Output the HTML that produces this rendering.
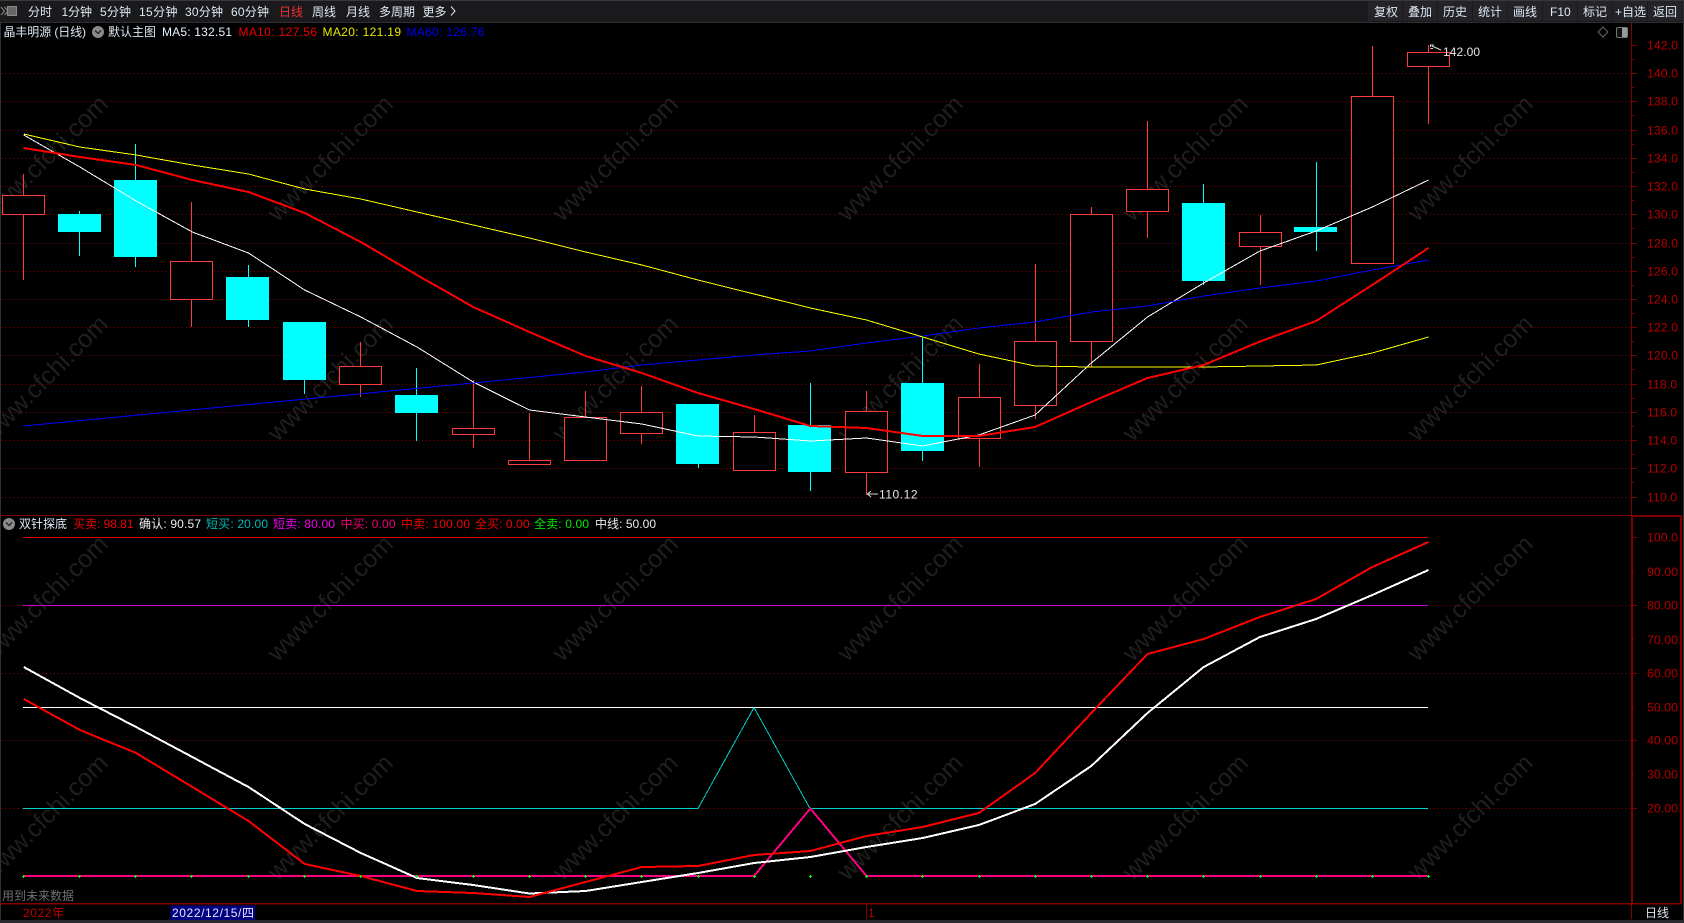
<!DOCTYPE html>
<html><head><meta charset="utf-8"><title>晶丰明源</title>
<style>
html,body{margin:0;padding:0;background:#000;width:1684px;height:923px;overflow:hidden}
svg{display:block;position:absolute;left:0;top:0}
text{font-family:"Liberation Sans","Noto Sans CJK SC",sans-serif;font-size:12px;white-space:pre}
.wm text{font-size:25px;fill:#1f1f1f;text-anchor:middle}
.ax text{fill:#b30000;font-size:12.4px}
.tb text{fill:#dde8f2}
.btn{fill:#242428}
.grid{stroke:#900000;stroke-width:1;stroke-dasharray:1 3;fill:none}
.r{fill:#000;stroke:#ff3c3c;stroke-width:1}
.rw{fill:#ff3c3c}
.c,.cw{fill:#00ffff}
</style></head><body>
<svg width="1684" height="923" viewBox="0 0 1684 923" xmlns="http://www.w3.org/2000/svg">
<rect width="1684" height="923" fill="#000"/>
<!-- watermark -->
<g class="wm">
<text transform="translate(51,164) rotate(-45)">www.cfchi.com</text>
<text transform="translate(336,164) rotate(-45)">www.cfchi.com</text>
<text transform="translate(621,164) rotate(-45)">www.cfchi.com</text>
<text transform="translate(906,164) rotate(-45)">www.cfchi.com</text>
<text transform="translate(1191,164) rotate(-45)">www.cfchi.com</text>
<text transform="translate(1476,164) rotate(-45)">www.cfchi.com</text>
<text transform="translate(51,384) rotate(-45)">www.cfchi.com</text>
<text transform="translate(336,384) rotate(-45)">www.cfchi.com</text>
<text transform="translate(621,384) rotate(-45)">www.cfchi.com</text>
<text transform="translate(906,384) rotate(-45)">www.cfchi.com</text>
<text transform="translate(1191,384) rotate(-45)">www.cfchi.com</text>
<text transform="translate(1476,384) rotate(-45)">www.cfchi.com</text>
<text transform="translate(51,604) rotate(-45)">www.cfchi.com</text>
<text transform="translate(336,604) rotate(-45)">www.cfchi.com</text>
<text transform="translate(621,604) rotate(-45)">www.cfchi.com</text>
<text transform="translate(906,604) rotate(-45)">www.cfchi.com</text>
<text transform="translate(1191,604) rotate(-45)">www.cfchi.com</text>
<text transform="translate(1476,604) rotate(-45)">www.cfchi.com</text>
<text transform="translate(51,823) rotate(-45)">www.cfchi.com</text>
<text transform="translate(336,823) rotate(-45)">www.cfchi.com</text>
<text transform="translate(621,823) rotate(-45)">www.cfchi.com</text>
<text transform="translate(906,823) rotate(-45)">www.cfchi.com</text>
<text transform="translate(1191,823) rotate(-45)">www.cfchi.com</text>
<text transform="translate(1476,823) rotate(-45)">www.cfchi.com</text>
</g>
<!-- main grid -->
<g class="grid" shape-rendering="crispEdges">
<path d="M2 73.5H1631M2 101.5H1631M2 130.5H1631M2 158.5H1631M2 186.5H1631M2 214.5H1631M2 243.5H1631M2 271.5H1631M2 299.5H1631M2 327.5H1631M2 355.5H1631M2 384.5H1631M2 412.5H1631M2 440.5H1631M2 468.5H1631M2 497.5H1631"/>
<path d="M2 605.5H1631M2 673.5H1631M2 740.5H1631M2 808.5H1631"/>
</g>
<!-- candles -->
<g shape-rendering="crispEdges">
<rect class="rw" x="23" y="174" width="1" height="106"/><rect class="r" x="2.5" y="195.5" width="42" height="19"/>
<rect class="cw" x="79" y="211" width="1" height="45"/><rect class="c" x="58" y="214" width="43" height="18"/>
<rect class="cw" x="135" y="144" width="1" height="123"/><rect class="c" x="114" y="180" width="43" height="77"/>
<rect class="rw" x="191" y="202" width="1" height="125"/><rect class="r" x="170.5" y="261.5" width="42" height="38"/>
<rect class="cw" x="248" y="265" width="1" height="62"/><rect class="c" x="226" y="277" width="43" height="43"/>
<rect class="cw" x="304" y="322" width="1" height="72"/><rect class="c" x="283" y="322" width="43" height="58"/>
<rect class="rw" x="360" y="342" width="1" height="55"/><rect class="r" x="339.5" y="366.5" width="42" height="18"/>
<rect class="cw" x="416" y="368" width="1" height="73"/><rect class="c" x="395" y="395" width="43" height="18"/>
<rect class="rw" x="473" y="380" width="1" height="68"/><rect class="r" x="452.5" y="428.5" width="42" height="6"/>
<rect class="rw" x="529" y="413" width="1" height="47"/><rect class="r" x="508.5" y="460.5" width="42" height="4"/>
<rect class="rw" x="585" y="391" width="1" height="26"/><rect class="r" x="564.5" y="417.5" width="42" height="43"/>
<rect class="rw" x="641" y="386" width="1" height="58"/><rect class="r" x="620.5" y="412.5" width="42" height="21"/>
<rect class="cw" x="698" y="404" width="1" height="64"/><rect class="c" x="676" y="404" width="43" height="60"/>
<rect class="rw" x="754" y="415" width="1" height="17"/><rect class="r" x="733.5" y="432.5" width="42" height="38"/>
<rect class="cw" x="810" y="383" width="1" height="108"/><rect class="c" x="788" y="425" width="43" height="47"/>
<rect class="rw" x="866" y="391" width="1" height="104"/><rect class="r" x="845.5" y="411.5" width="42" height="61"/>
<rect class="cw" x="922" y="336" width="1" height="125"/><rect class="c" x="901" y="383" width="43" height="68"/>
<rect class="rw" x="979" y="364" width="1" height="103"/><rect class="r" x="958.5" y="397.5" width="42" height="41"/>
<rect class="rw" x="1035" y="264" width="1" height="155"/><rect class="r" x="1014.5" y="341.5" width="42" height="64"/>
<rect class="rw" x="1091" y="207" width="1" height="160"/><rect class="r" x="1070.5" y="214.5" width="42" height="127"/>
<rect class="rw" x="1147" y="121" width="1" height="117"/><rect class="r" x="1126.5" y="189.5" width="42" height="22"/>
<rect class="cw" x="1203" y="184" width="1" height="101"/><rect class="c" x="1182" y="203" width="43" height="78"/>
<rect class="rw" x="1260" y="215" width="1" height="70"/><rect class="r" x="1239.5" y="232.5" width="42" height="14"/>
<rect class="cw" x="1316" y="162" width="1" height="89"/><rect class="c" x="1294" y="227" width="43" height="5"/>
<rect class="rw" x="1372" y="46" width="1" height="50"/><rect class="r" x="1351.5" y="96.5" width="42" height="167"/>
<rect class="rw" x="1428" y="45" width="1" height="79"/><rect class="r" x="1407.5" y="52.5" width="42" height="14"/>
</g>
<!-- MA lines -->
<g fill="none" shape-rendering="crispEdges">
<polyline stroke="#ffffff" stroke-width="1" points="23.7,135 79.9,167 136.1,201 192.3,232 248.5,253 304.7,290 360.8,317 417,347 473.2,382 529.4,410 585.6,417 641.8,424 698,436 754.2,437 810.4,441 866.5,438 922.7,446 978.9,435 1035.1,415 1091.3,363 1147.5,317 1203.7,283 1259.9,251 1316.1,231 1372.3,207 1428.5,180"/>
<polyline stroke="#0000ff" stroke-width="1" points="23.7,426 473.2,383 585.6,372 641.8,365 698,360 754.2,355 810.4,351 866.5,343 922.7,336 978.9,328 1035.1,322 1091.3,312 1147.5,306 1203.7,296 1259.9,288 1316.1,281 1372.3,270 1428.5,260"/>
<polyline stroke="#ffff00" stroke-width="1" points="23.7,134 79.9,147 136.1,155 192.3,165 248.5,174 304.7,189 360.8,199 417,212 473.2,225 529.4,238 585.6,252 641.8,265 698,280 754.2,294 810.4,308 866.5,320 922.7,337 978.9,354 1035.1,366 1091.3,367 1147.5,367 1203.7,367 1259.9,366 1316.1,365 1372.3,353 1428.5,337"/>
<polyline stroke="#ff0000" stroke-width="2" points="23.7,148 79.9,157 136.1,165 192.3,180 248.5,192 304.7,213 360.8,242 417,275 473.2,307 529.4,332 585.6,356 641.8,373 698,393 754.2,409 810.4,426 866.5,428 922.7,436 978.9,436 1035.1,427 1091.3,402 1147.5,378 1203.7,365 1259.9,341.5 1316.1,321 1372.3,285 1428.5,248"/>
</g>
<!-- lower pane lines -->
<g fill="none" shape-rendering="crispEdges">
<path d="M23 537.5H1428" stroke="#e00000"/>
<path d="M23 605.5H1428" stroke="#d000d0"/>
<path d="M23 707.5H1428" stroke="#ffffff"/>
<polyline stroke="#00d0d0" stroke-width="1" points="23,808.5 698,808.5 754,707.5 810,808.5 1428,808.5"/>
<polyline stroke="#ff0080" stroke-width="2" points="23,876 754,876 810.4,808.5 866.5,876 1428,876"/>
<polyline stroke="#ffffff" stroke-width="2" points="23.7,667 79.9,698 136.1,727 192.3,757 248.5,787 304.7,824 360.8,853 417,878 473.2,885 529.4,893.5 585.6,891 641.8,882 698,873 754.2,863 810.4,857 866.5,847 922.7,838 978.9,825 1035.1,804 1091.3,766 1147.5,713 1203.7,667 1259.9,637 1316.1,619 1372.3,595 1428.5,570"/>
<polyline stroke="#ff0000" stroke-width="2" points="23.7,699 79.9,730 136.1,753 192.3,787 248.5,821 304.7,864 360.8,876 417,891 473.2,893 529.4,897 585.6,882 641.8,867 698,866 754.2,855 810.4,851 866.5,836 922.7,827 978.9,813 1035.1,773 1091.3,713 1147.5,654 1203.7,639 1259.9,617 1316.1,599 1372.3,567 1428.5,542"/>
</g>
<g fill="#00ff00" shape-rendering="crispEdges">
<path d="M23 875h1v3h-1zM22 876h3v1h-3zM79 875h1v3h-1zM78 876h3v1h-3zM135 875h1v3h-1zM134 876h3v1h-3zM191 875h1v3h-1zM190 876h3v1h-3zM248 875h1v3h-1zM247 876h3v1h-3zM304 875h1v3h-1zM303 876h3v1h-3zM360 875h1v3h-1zM359 876h3v1h-3zM416 875h1v3h-1zM415 876h3v1h-3zM473 875h1v3h-1zM472 876h3v1h-3zM529 875h1v3h-1zM528 876h3v1h-3zM585 875h1v3h-1zM584 876h3v1h-3zM641 875h1v3h-1zM640 876h3v1h-3zM698 875h1v3h-1zM697 876h3v1h-3zM754 875h1v3h-1zM753 876h3v1h-3zM810 875h1v3h-1zM809 876h3v1h-3zM866 875h1v3h-1zM865 876h3v1h-3zM922 875h1v3h-1zM921 876h3v1h-3zM979 875h1v3h-1zM978 876h3v1h-3zM1035 875h1v3h-1zM1034 876h3v1h-3zM1091 875h1v3h-1zM1090 876h3v1h-3zM1147 875h1v3h-1zM1146 876h3v1h-3zM1203 875h1v3h-1zM1202 876h3v1h-3zM1260 875h1v3h-1zM1259 876h3v1h-3zM1316 875h1v3h-1zM1315 876h3v1h-3zM1372 875h1v3h-1zM1371 876h3v1h-3zM1428 875h1v3h-1zM1427 876h3v1h-3z"/>
</g>
<!-- frames -->
<g shape-rendering="crispEdges" fill="#800000">
<rect x="1631" y="23" width="1" height="493"/>
<rect x="0" y="515" width="1681" height="1"/>
<rect x="1631" y="515" width="51" height="2"/>
<rect x="1631" y="516" width="2" height="388"/>
<rect x="1680" y="516" width="2" height="388"/>
<rect x="0" y="903" width="1682" height="1.5"/>
<rect x="1631" y="904" width="1" height="15"/>
<rect x="866" y="904" width="1" height="15"/>
<path d="M1632 45h5v1h-5zM1632 73h5v1h-5zM1632 101h5v1h-5zM1632 130h5v1h-5zM1632 158h5v1h-5zM1632 186h5v1h-5zM1632 214h5v1h-5zM1632 243h5v1h-5zM1632 271h5v1h-5zM1632 299h5v1h-5zM1632 327h5v1h-5zM1632 355h5v1h-5zM1632 384h5v1h-5zM1632 412h5v1h-5zM1632 440h5v1h-5zM1632 468h5v1h-5zM1632 497h5v1h-5z"/>
<path d="M1632 59h2v1h-2zM1632 87h2v1h-2zM1632 115h2v1h-2zM1632 144h2v1h-2zM1632 172h2v1h-2zM1632 200h2v1h-2zM1632 228h2v1h-2zM1632 257h2v1h-2zM1632 285h2v1h-2zM1632 313h2v1h-2zM1632 341h2v1h-2zM1632 369h2v1h-2zM1632 398h2v1h-2zM1632 426h2v1h-2zM1632 454h2v1h-2zM1632 482h2v1h-2z"/>
<path d="M1633 537h4v1h-4zM1633 605h4v1h-4zM1633 673h4v1h-4zM1633 740h4v1h-4zM1633 808h4v1h-4zM1633 571h1v1h-1zM1633 639h1v1h-1zM1633 707h1v1h-1zM1633 774h1v1h-1z"/>
</g>
<g class="ax">
<text x="1647" y="49.5">142.0</text><text x="1647" y="77.5">140.0</text><text x="1647" y="105.5">138.0</text><text x="1647" y="134.5">136.0</text><text x="1647" y="162.5">134.0</text><text x="1647" y="190.5">132.0</text><text x="1647" y="218.5">130.0</text><text x="1647" y="247.5">128.0</text><text x="1647" y="275.5">126.0</text><text x="1647" y="303.5">124.0</text><text x="1647" y="331.5">122.0</text><text x="1647" y="359.5">120.0</text><text x="1647" y="388.5">118.0</text><text x="1647" y="416.5">116.0</text><text x="1647" y="444.5">114.0</text><text x="1647" y="472.5">112.0</text><text x="1647" y="501.5">110.0</text>
<text x="1647" y="541.5">100.0</text><text x="1647" y="576">90.00</text><text x="1647" y="609.5">80.00</text><text x="1647" y="644">70.00</text><text x="1647" y="677.5">60.00</text><text x="1647" y="711.5">50.00</text><text x="1647" y="744.5">40.00</text><text x="1647" y="778.5">30.00</text><text x="1647" y="812.5">20.00</text>
</g>
<!-- price markers -->
<g fill="none" stroke="#d8d8d8" stroke-width="1">
<path d="M1432 46L1441 50M1430.5 47V45H1434M1430.5 48.5H1433"/>
<path d="M868 494H878M871 491L867.5 494L871 497"/>
</g>
<text x="1443" y="56" fill="#e6e6e6" font-size="12.3" textLength="37">142.00</text>
<text x="879" y="498.5" fill="#e6e6e6" textLength="38.5">110.12</text>
<!-- top bar -->
<rect x="0" y="0" width="1684" height="22" fill="#1a1a1d"/>
<rect x="0" y="0" width="1684" height="1" fill="#3a3a3d"/>
<rect x="0" y="22" width="1684" height="1" fill="#2e2e30"/>
<path d="M1 7l3.500 4-3.500 4M4.500 7l3.500 4-3.500 4" stroke="#8a8a8a" fill="none"/>
<rect x="7.5" y="6.5" width="9" height="9" fill="#666" stroke="#8a8a8a"/>
<rect x="1368" y="1" width="34" height="20" class="btn"/><rect x="1403" y="1" width="34" height="20" class="btn"/><rect x="1438" y="1" width="34" height="20" class="btn"/><rect x="1473" y="1" width="34" height="20" class="btn"/><rect x="1508" y="1" width="34" height="20" class="btn"/><rect x="1543" y="1" width="34" height="20" class="btn"/><rect x="1578" y="1" width="34" height="20" class="btn"/><rect x="1613" y="1" width="34" height="20" class="btn"/><rect x="1648" y="1" width="34" height="20" class="btn"/>
<g class="tb">
<text x="28" y="16">分时</text>
<text x="61.5" y="16" textLength="30.5">1分钟</text>
<text x="100" y="16" textLength="31">5分钟</text>
<text x="139" y="16" textLength="38.5">15分钟</text>
<text x="185" y="16" textLength="38">30分钟</text>
<text x="231" y="16" textLength="38">60分钟</text>
<text x="279" y="16" style="fill:#f03030">日线</text>
<text x="312" y="16">周线</text>
<text x="346" y="16">月线</text>
<text x="379" y="16">多周期</text>
<text x="422.5" y="16">更多</text>
<path d="M451 6.5l4 4.500-4 4.500" fill="none" stroke="#dde8f2"/>
<text x="1374" y="16">复权</text><text x="1408" y="16">叠加</text><text x="1443" y="16">历史</text><text x="1478" y="16">统计</text><text x="1513" y="16">画线</text><text x="1550" y="16">F10</text><text x="1583" y="16">标记</text><text x="1615" y="16" textLength="31">+自选</text><text x="1653" y="16">返回</text>
</g>
<!-- title row -->
<text x="3.5" y="36" fill="#dce8f4" textLength="82.5">晶丰明源 (日线)</text>
<circle cx="98" cy="32" r="6" fill="#8a8a8a"/><path d="M95 30.5l3 3 3-3" fill="none" stroke="#222" stroke-width="1.3"/>
<text x="108" y="36" fill="#dce8f4">默认主图</text>
<text x="162" y="36" fill="#e8f4ff" textLength="70">MA5: 132.51</text>
<text x="238.5" y="36" fill="#f00000" textLength="78.5">MA10: 127.56</text>
<text x="322.5" y="36" fill="#e8e800" textLength="78.5">MA20: 121.19</text>
<text x="406.5" y="36" fill="#0000f0" textLength="78">MA60: 126.76</text>
<path d="M1603 27l5 5-5 5-5-5z" fill="none" stroke="#6a6a6a"/>
<rect x="1616.5" y="27.5" width="11" height="10" rx="1.5" fill="#111" stroke="#777"/><rect x="1622" y="28" width="5" height="9" fill="#999"/>
<!-- lower title row -->
<circle cx="9" cy="524" r="6" fill="#8a8a8a"/><path d="M6 522.5l3 3 3-3" fill="none" stroke="#222" stroke-width="1.3"/>
<text x="19" y="528" fill="#dce8f4">双针探底</text>
<text x="73" y="528" fill="#f00000" textLength="60.5">买卖: 98.81</text>
<text x="139" y="528" fill="#ececec" textLength="62">确认: 90.57</text>
<text x="206" y="528" fill="#00b8b8" textLength="62">短买: 20.00</text>
<text x="273" y="528" fill="#f000f0" textLength="62">短卖: 80.00</text>
<text x="340.5" y="528" fill="#f00078" textLength="55">中买: 0.00</text>
<text x="401" y="528" fill="#f00000" textLength="69">中卖: 100.00</text>
<text x="475" y="528" fill="#f00000" textLength="54.5">全买: 0.00</text>
<text x="534" y="528" fill="#00e800" textLength="55">全卖: 0.00</text>
<text x="595" y="528" fill="#ececec" textLength="61">中线: 50.00</text>
<text x="2" y="900" fill="#707070">用到未来数据</text>
<!-- time bar -->
<text x="23" y="917" fill="#c00000" textLength="41">2022年</text>
<rect x="170.5" y="905.5" width="84.5" height="14.5" fill="#000080"/>
<text x="172" y="917" fill="#e8e8ff" textLength="82">2022/12/15/四</text>
<text x="868" y="917" fill="#b00000">1</text>
<text x="1645" y="917" fill="#dce8f4">日线</text>
<!-- edges -->
<rect x="0" y="23" width="1" height="897" fill="#333"/>
<rect x="1683" y="0" width="1" height="923" fill="#333"/>
<rect x="0" y="920" width="1684" height="3" fill="#2c2c2e"/>
</svg>
</body></html>
